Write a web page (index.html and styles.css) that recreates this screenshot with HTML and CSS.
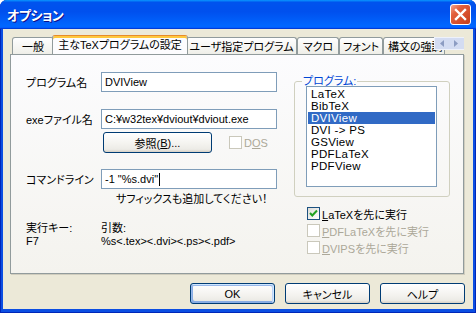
FILE: index.html
```html
<!DOCTYPE html>
<html lang="ja">
<head>
<meta charset="utf-8">
<title>オプション</title>
<link rel="stylesheet" href="styles.css">
</head>
<body>
<div class="window">
  <div class="titlebar">
    <span class="title">オプション</span>
    <span class="close"><svg width="19" height="19" viewBox="0 0 19 19"><path d="M5 5 L14 14 M14 5 L5 14" stroke="#fff" stroke-width="2.4" stroke-linecap="square"/></svg></span>
  </div>
  <div class="client">
    <div class="tabs">
      <div class="tab w1">一般</div>
      <div class="tab active w2">主なTeXプログラムの設定</div>
      <div class="tab w3">ユーザ指定プログラム</div>
      <div class="tab w4">マクロ</div>
      <div class="tab w5">フォント</div>
      <div class="tab w6">構文の強調</div>
      <div class="scroller">
        <svg width="31" height="13" viewBox="0 0 31 13"><path d="M10 3 L6 6.5 L10 10 Z" fill="#8C9CC2"/><path d="M20 3 L24 6.5 L20 10 Z" fill="#8C9CC2"/></svg>
      </div>
    </div>
    <div class="panel">
      <div class="left">
        <div class="row"><span class="lbl">プログラム名</span><div class="edit">DVIView</div></div>
        <div class="row r2"><span class="lbl">exeファイル名</span><div class="edit">C:¥w32tex¥dviout¥dviout.exe</div></div>
        <div class="row r3">
          <div class="btn browse">参照(<u>B</u>)...</div>
          <div class="check dos"><span class="cb disabled"></span><span class="cbtext dis">D<u>O</u>S</span></div>
        </div>
        <div class="row r4"><span class="lbl">コマンドライン</span><div class="edit">-1 "%s.dvi"<span class="caret"></span></div></div>
        <div class="hint">サフィックスも追加してください！</div>
        <div class="info">
          <span>実行キー:</span><span>引数:</span>
          <span>F7</span><span>%s&lt;.tex&gt;&lt;.dvi&gt;&lt;.ps&gt;&lt;.pdf&gt;</span>
        </div>
      </div>
      <div class="right">
        <fieldset class="group">
          <legend>プログラム:</legend>
          <div class="listbox">
            <div class="item">LaTeX</div>
            <div class="item">BibTeX</div>
            <div class="item sel">DVIView</div>
            <div class="item">DVI -&gt; PS</div>
            <div class="item">GSView</div>
            <div class="item">PDFLaTeX</div>
            <div class="item">PDFView</div>
          </div>
        </fieldset>
        <div class="checks">
          <div class="check"><span class="cb"><svg width="11" height="11" viewBox="0 0 11 11"><path d="M2 5 L4.3 7.5 L9 2.5" fill="none" stroke="#21A121" stroke-width="2"/></svg></span><span class="cbtext"><u>L</u>aTeXを先に実行</span></div>
          <div class="check"><span class="cb disabled"></span><span class="cbtext dis"><u>P</u>DFLaTeXを先に実行</span></div>
          <div class="check"><span class="cb disabled"></span><span class="cbtext dis"><u>D</u>VIPSを先に実行</span></div>
        </div>
      </div>
    </div>
    <div class="buttons">
      <div class="btn dlg default">OK</div>
      <div class="btn dlg">キャンセル</div>
      <div class="btn dlg">ヘルプ</div>
    </div>
  </div>
</div>
</body>
</html>
```

FILE: styles.css
```css
* { box-sizing: border-box; }
html, body { margin: 0; padding: 0; }
body {
  width: 476px;
  height: 313px;
  overflow: hidden;
  background: #ffffff;
  font-family: "Liberation Sans", "Noto Sans CJK JP", sans-serif;
  font-size: 11px;
  font-feature-settings: "palt";
  color: #000;
}
.window {
  width: 476px;
  height: 313px;
  display: flex;
  flex-direction: column;
  background: #0B4EE2;
  box-shadow: inset 1px 0 #0026B8, inset -1px 0 #0026B8, inset 0 -1px #0026B8;
  border-radius: 7px 7px 0 0;
  overflow: hidden;
}
.titlebar {
  height: 29px;
  flex: none;
  display: flex;
  align-items: center;
  justify-content: space-between;
  padding: 0 5px 0 7px;
  background: linear-gradient(180deg, #0997ff, #0053ee 8%, #0050ee 40%, #0066ff 88%, #0066ff 93%, #005bff 95%, #003dd7 96%, #003dd7);
}
.title {
  color: #fff;
  font-weight: bold;
  font-size: 13px;
  letter-spacing: -0.5px;
  text-shadow: 1px 1px #0f1089;
  padding-bottom: 1px;
}
.close {
  width: 21px;
  height: 21px;
  border: 1px solid #fff;
  border-radius: 3px;
  background: linear-gradient(135deg, #F2A58E 0%, #E2603D 30%, #D44B28 70%, #C43E1C 100%);
  display: flex;
  align-items: center;
  justify-content: center;
}
.client {
  flex: 1;
  margin: 0 3px 4px 3px;
  background: #ECE9D8;
  display: flex;
  flex-direction: column;
  padding: 6px 9px 5px 7px;
}
.tabs {
  position: relative;
  height: 19px;
  display: flex;
  align-items: flex-end;
  padding-left: 2px;
  overflow: hidden;
  flex: none;
}
.tab {
  flex: none;
  height: 17px;
  border: 1px solid #919B9C;
  border-bottom: none;
  border-radius: 3px 3px 0 0;
  background: linear-gradient(180deg, #ffffff, #fafaf9 26%, #f0f0ea 95%, #ecebe6);
  display: flex;
  align-items: center;
  justify-content: center;
  white-space: nowrap;
  overflow: hidden;
  padding-bottom: 1px;
}
.tab.active {
  position: relative;
  z-index: 2;
  height: 20px;
  margin: 0 -2px -1px;
  background: #FCFCFE;
  border-top-color: #E68B2C;
  box-shadow: inset 0 2px #FFC83C;
  padding-bottom: 3px;
}
.w1 { width: 42px; }
.w2 { width: 136px; }
.w3 { width: 111px; }
.w4 { width: 42px; }
.w5 { width: 44px; }
.w6 { width: 62px; justify-content: flex-start; padding-left: 4px; }
.scroller {
  position: absolute;
  right: -1px;
  top: 2px;
  width: 31px;
  height: 13px;
  background: #D3DCF2;
  border: 1px solid #EEF2FB;
  z-index: 3;
  display: flex;
}
.scroller svg { display: block; margin: -1px; }
.panel {
  position: relative;
  z-index: 1;
  height: 220px;
  flex: none;
  border: 1px solid #919B9C;
  background: linear-gradient(180deg, #FCFCFE, #F4F3EE);
  box-shadow: 1px 1px #D0CDBE;
  padding: 17px 0 0 15px;
  display: flex;
}
.left {
  width: 268px;
  display: flex;
  flex-direction: column;
}
.row {
  display: flex;
  align-items: center;
}
.lbl { width: 75px; flex: none; }
.edit {
  width: 176px;
  height: 20px;
  border: 1px solid #7F9DB9;
  background: #fff;
  padding: 0 3px;
  display: flex;
  align-items: center;
  white-space: nowrap;
}
.caret {
  display: inline-block;
  width: 1px;
  height: 13px;
  background: #000;
  margin-left: 1px;
}
.r2 { margin-top: 17px; }
.r3 { margin-top: 3px; padding-left: 77px; }
.r4 { margin-top: 16px; }
.btn {
  border: 1px solid #003C74;
  border-radius: 3px;
  background: linear-gradient(180deg, #ffffff, #f3f2ee 60%, #ecebe6 86%, #d6d0c5);
  display: flex;
  align-items: center;
  justify-content: center;
  white-space: nowrap;
}
.browse { width: 109px; height: 21px; }
.check {
  display: flex;
  align-items: center;
  height: 13px;
}
.dos { margin-left: 17px; }
.cb {
  width: 13px;
  height: 13px;
  flex: none;
  border: 1px solid #1C5180;
  background: linear-gradient(135deg, #DCDCD7, #ffffff);
  display: flex;
  align-items: center;
  justify-content: center;
}
.cb.disabled {
  border-color: #CAC8BB;
  background: #ffffff;
}
.cbtext { margin-left: 2px; white-space: nowrap; }
.dis { color: #ACA899; }
.hint {
  margin-top: 3px;
  padding-left: 90px;
  line-height: 14px;
  white-space: nowrap;
}
.info {
  margin-top: 16px;
  display: grid;
  grid-template-columns: 75px auto;
  line-height: 13px;
}
.right {
  padding-top: 3px;
  display: flex;
  flex-direction: column;
}
.group {
  margin: 0;
  width: 156px;
  padding: 0 12px 9px 11px;
  border: 1px solid #D0D0BF;
  border-radius: 3px;
}
.group legend {
  color: #0046D5;
  padding: 0 1px;
  margin-left: -4px;
  line-height: 12px;
}
.listbox {
  margin-top: -1px;
  width: 131px;
  height: 101px;
  border: 1px solid #7F9DB9;
  background: #fff;
  padding-top: 1px;
  font-family: "Liberation Sans", sans-serif;
  font-size: 11.5px;
  letter-spacing: 0.3px;
}
.item {
  height: 12px;
  line-height: 12px;
  margin: 0 1px;
  padding-left: 3px;
  white-space: nowrap;
}
.item.sel { background: #316AC5; color: #fff; }
.checks {
  margin-top: 10px;
  padding-left: 13px;
  display: flex;
  flex-direction: column;
  gap: 4px;
}
.buttons {
  margin-top: 9px;
  margin-right: -1px;
  display: flex;
  justify-content: flex-end;
  gap: 10px;
}
.dlg { width: 85px; height: 21px; }
.default {
  box-shadow: inset -1px 1px #cee7ff, inset 1px 2px #98b8ea, inset -2px 2px #bcd4f6, inset 1px -1px #89ade4, inset 2px -2px #89ade4;
}
```
